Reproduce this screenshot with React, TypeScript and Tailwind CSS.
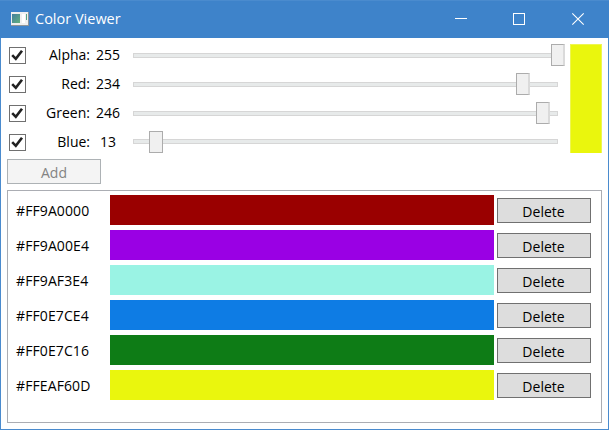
type Channel = { name: string; value: string; left: number; shift?: boolean };

const channels: Channel[] = [
  { name: "Alpha:", value: "255", left: 418 },
  { name: "Red:", value: "234", left: 383 },
  { name: "Green:", value: "246", left: 403 },
  { name: "Blue:", value: "13", left: 16, shift: true },
];

const colors = ["#FF9A0000", "#FF9A00E4", "#FF9AF3E4", "#FF0E7CE4", "#FF0E7C16", "#FFEAF60D"];

function TitleBar() {
  return (
    <header className="flex h-[38px] shrink-0 items-center border-t border-[#4a8bce] bg-[#3e83ca] text-white">
      <svg className="ml-[10px]" width="20" height="17" viewBox="0 0 20 17" shapeRendering="crispEdges">
        <defs>
          <linearGradient id="pane" x1="0" y1="0" x2="1" y2="1">
            <stop offset="0" stopColor="#447fa0" />
            <stop offset="1" stopColor="#62b07e" />
          </linearGradient>
        </defs>
        <rect x="1" y="1" width="18" height="14" fill="#8d9499" />
        <rect x="1" y="1" width="17" height="13" fill="#efefef" />
        <rect x="2" y="3" width="8" height="9" fill="url(#pane)" />
        <rect x="12" y="3" width="3" height="9" fill="#ffffff" />
        <rect x="16" y="3" width="1" height="6" fill="#57a384" />
      </svg>
      <h1 className="ml-[5px] w-[100px] pb-px text-[14.5px] leading-5 font-normal whitespace-nowrap">Color Viewer</h1>
      <svg className="mr-px ml-auto" width="154" height="37" viewBox="0 0 154 37" fill="none" stroke="white">
        <path d="M1 17.5H13M59.5 12.5H70.5V23.5H59.5Z" shapeRendering="crispEdges" />
        <path d="M118.3 12.3L129.7 23.7M129.7 12.3L118.3 23.7" strokeWidth="1.1" />
      </svg>
    </header>
  );
}

function ChannelRow({ name, value, left, shift }: Channel) {
  return (
    <div className="flex h-[29px] items-center">
      <span className="flex size-[17px] shrink-0 border border-[#707070] bg-white">
        <svg width="15" height="15" viewBox="0 0 15 15" fill="none" stroke="#212121" strokeWidth="2.6">
          <path d="M2.2 7.2L5.8 10.8L12 2.8" />
        </svg>
      </span>
      <span className="w-[64px] pb-px text-right">{name}</span>
      <span className="w-[36px] pb-px text-center">{value}</span>
      <div className={`ml-[7px] flex h-[22px] w-[425px] items-center ${shift ? "pb-[2px]" : ""}`}>
        <div className="relative h-[5px] w-full border border-[#d6d6d6] bg-[#e7eaea]">
          <div
            className={`absolute h-[22px] w-[14px] border border-[#acacac] bg-[#f0f0f0] ${shift ? "-top-[9px]" : "-top-[10px] border-r-2 border-r-[#dadada]"}`}
            style={{ left: left - 1 }}
          />
        </div>
      </div>
    </div>
  );
}

function ColorRow({ color }: { color: string }) {
  return (
    <div className="flex h-[35px] items-center">
      <span className="w-[94px] pt-[3px] tracking-[0.1px] whitespace-nowrap">{color}</span>
      <div className="h-[30px] w-[384px]" style={{ backgroundColor: "#" + color.slice(3) }} />
      <button className="mt-px ml-[3px] h-[25px] w-[94px] border border-[#707070] bg-[#dddddd] pt-px pr-px leading-[23px]">Delete</button>
    </div>
  );
}

export default function App() {
  return (
    <main className="flex h-[430px] w-[609px] flex-col overflow-hidden bg-white font-['Open_Sans','Noto_Sans',sans-serif] text-[14px] leading-5 font-normal text-black">
      <TitleBar />
      <div className="flex min-h-0 flex-1 flex-col border border-t-0 border-[#4a8bce] pt-[3px] pr-[6px] pb-[6px] pl-[6px]">
        <div className="flex pl-[2px]">
          <div>
            {channels.map((c) => (
              <ChannelRow key={c.name} {...c} />
            ))}
          </div>
          <div className="mt-[3px] ml-auto h-[109px] w-[32px] border border-b-0 border-[#eef651] bg-[#eaf60d]" />
        </div>
        <button className="mt-[2px] h-[25px] w-[94px] shrink-0 border border-[#adb2b5] bg-[#f4f4f4] pt-px leading-[23px] text-[#838383]">Add</button>
        <section className="mt-[6px] min-h-0 flex-1 border border-[#abadb3] pt-px pl-[8px]">
          {colors.map((c) => (
            <ColorRow key={c} color={c} />
          ))}
        </section>
      </div>
    </main>
  );
}
